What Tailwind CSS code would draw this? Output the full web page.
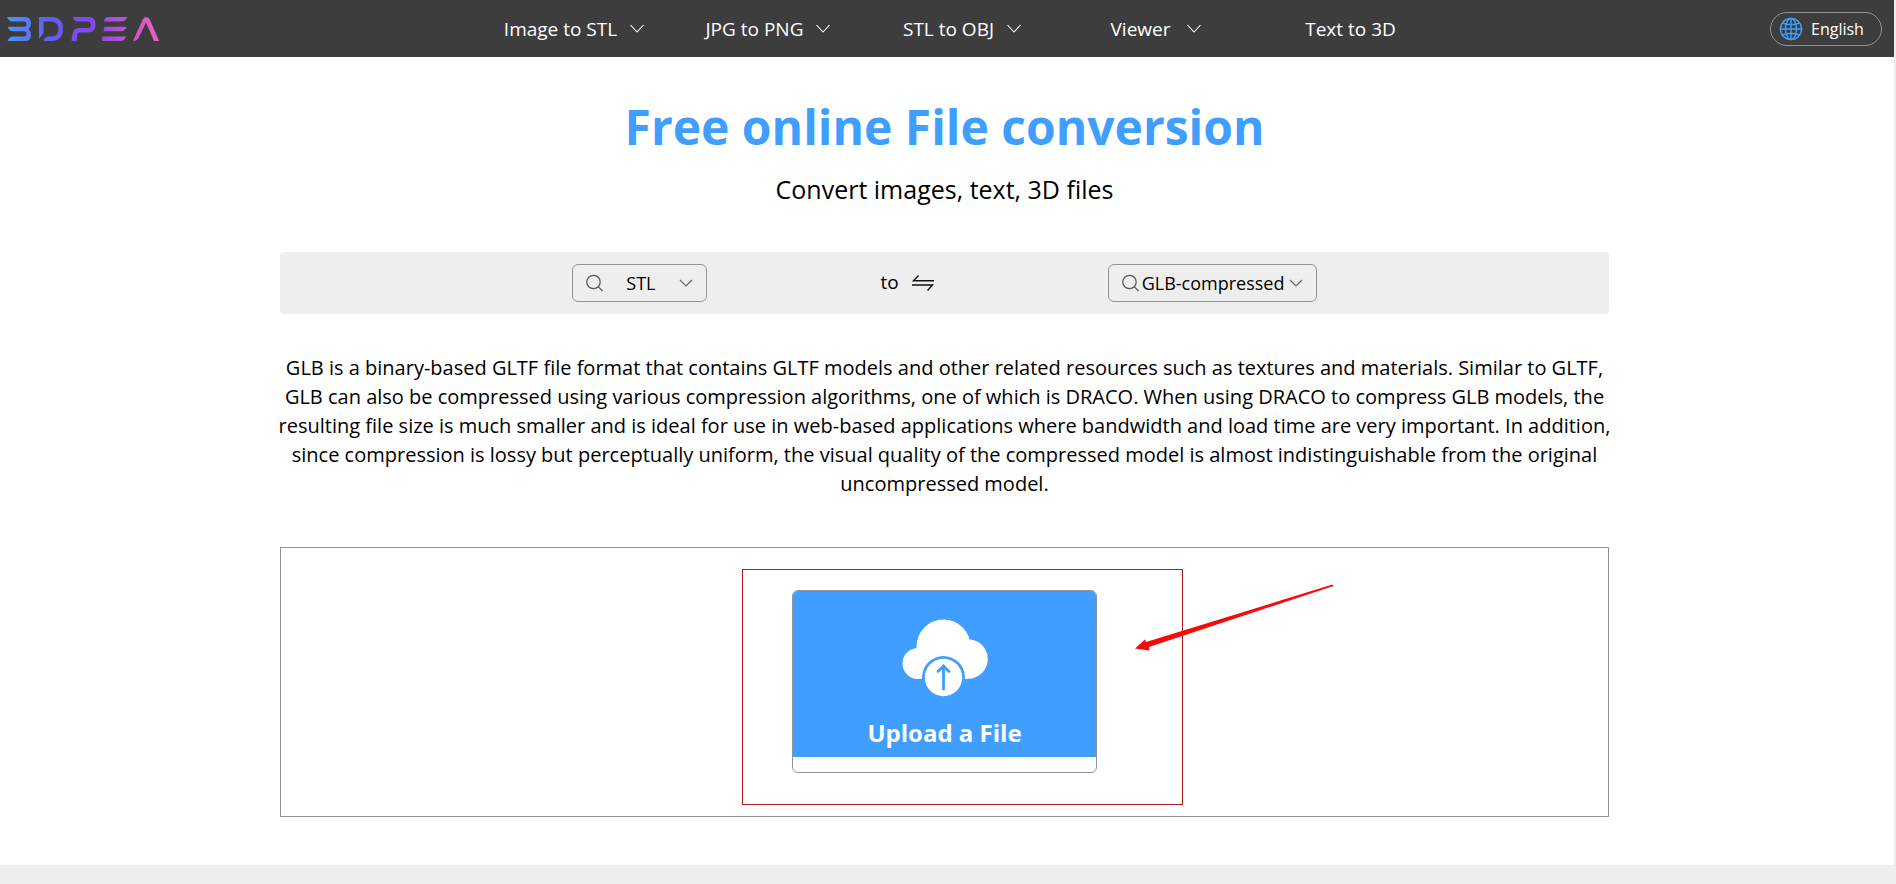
<!DOCTYPE html>
<html lang="en">

<head>
    <meta charset="UTF-8">
    <meta name="viewport" content="width=device-width, initial-scale=1.0">
    <script src="https://cdn.jsdelivr.net/npm/@tailwindcss/browser@4"></script>
    <title>3DPEA - Free online File conversion</title>
</head>

<body class="flex flex-col min-h-screen border-r-2 border-[#eeeeee] bg-white text-black font-['Open_Sans','Noto_Sans',sans-serif]">

    <!-- Header -->
    <header class="flex items-center justify-between h-[57px] pl-[7px] pr-3 bg-[#3d3d3d] text-white">
        <a href="#" aria-label="3DPEA" class="w-[228px]">
            <svg class="w-[153px] h-6" viewBox="0 0 153 24" fill="none">
                <defs>
                    <linearGradient id="logo" gradientUnits="userSpaceOnUse" x1="0" y1="0" x2="153" y2="0">
                        <stop offset="0" stop-color="#4a96f5" />
                        <stop offset="0.3" stop-color="#6659f5" />
                        <stop offset="0.55" stop-color="#8348ee" />
                        <stop offset="0.75" stop-color="#b750d8" />
                        <stop offset="1" stop-color="#f062bc" />
                    </linearGradient>
                </defs>
                <g fill="url(#logo)">
                    <path d="M0 0H18Q24 0 24 6Q24 10 21.500 12Q24 14 24 18Q24 24 18 24H0.500Q2 20 5.500 19.500H17Q19.500 19.500 19.500 17Q19.500 14.300 17 14.300H6Q2.500 14.300 0.500 9.800H17Q19.500 9.800 19.500 7.200Q19.500 4.500 17 4.500H5.500Q2 4.500 0 0Z" />
                    <path d="M32 0H44Q56 0 56 12Q56 24 44 24H36.500Q37.500 19.500 42 19.500H44Q51.500 19.500 51.500 12Q51.500 4.500 44 4.500H36.500V16L32 22Z" />
                    <path d="M66 0H82Q88.500 0 88.500 7.500Q88.500 15.500 81 15.500H72.500Q70.500 15.500 70.300 18L69.500 24H64.500L65.500 17Q66.500 11 72 11H80.500Q84 11 84 7.700Q84 4.500 80.500 4.500H70.500Q67 4.500 66 0Z" />
                    <path d="M101 0H120Q118.500 4.500 114.500 4.500H97Q98 0 101 0Z" />
                    <path d="M97.500 9.700H119.500Q118 14.300 114 14.300H96.500Z" />
                    <path d="M95.500 19.500H119Q117.500 24 113.500 24H95Z" />
                    <path d="M126 24L135.500 3Q137 0 139 0Q141.500 0 143 3L152 24H147L139 5.500L131.500 21Q130 24 126 24Z" />
                </g>
            </svg>
        </a>

        <nav class="grid grid-cols-5 w-[970px] text-[19px] leading-7">
            <a href="#" class="flex items-center justify-center gap-3 whitespace-nowrap">Image to STL
                <svg class="w-4 h-4" viewBox="0 0 16 16" fill="none" stroke="currentColor" stroke-width="1.1"><path d="M1.500 4L8 11L14.500 4" /></svg>
            </a>
            <a href="#" class="flex items-center justify-center gap-3 whitespace-nowrap">JPG to PNG
                <svg class="w-4 h-4" viewBox="0 0 16 16" fill="none" stroke="currentColor" stroke-width="1.1"><path d="M1.500 4L8 11L14.500 4" /></svg>
            </a>
            <a href="#" class="flex items-center justify-center gap-3 whitespace-nowrap">STL to OBJ
                <svg class="w-4 h-4" viewBox="0 0 16 16" fill="none" stroke="currentColor" stroke-width="1.1"><path d="M1.500 4L8 11L14.500 4" /></svg>
            </a>
            <a href="#" class="flex items-center justify-center gap-4 whitespace-nowrap">Viewer
                <svg class="w-4 h-4" viewBox="0 0 16 16" fill="none" stroke="currentColor" stroke-width="1.1"><path d="M1.500 4L8 11L14.500 4" /></svg>
            </a>
            <a href="#" class="flex items-center justify-center whitespace-nowrap">Text to 3D</a>
        </nav>

        <div class="flex justify-end w-48">
            <button class="flex items-center gap-2 h-[34px] px-2 w-28 border border-[#909399] rounded-full text-base">
                <svg class="w-6 h-6 shrink-0" viewBox="0 0 24 24" fill="none" stroke="#409eff" stroke-width="1.4">
                    <circle cx="12" cy="12" r="10.600" />
                    <ellipse cx="12" cy="12" rx="5.500" ry="10.600" />
                    <path d="M12 1.400V22.600M1.400 12H22.600M3.500 6Q12 9.500 20.500 6M3.500 18Q12 14.500 20.500 18" />
                </svg>
                English
            </button>
        </div>
    </header>

    <main class="grow w-full pr-[5px] pb-12">
        <div class="w-full max-w-[1329px] mx-auto text-center">
            <h1 class="pt-9 text-5xl leading-[68px] font-bold text-[#409eff]">Free online File conversion</h1>
            <p class="mt-3 text-[25px] leading-8">Convert images, text, 3D files</p>

            <!-- Format picker -->
            <div class="flex items-center justify-center mt-[47px] h-[62px] rounded bg-[#eeeeee] text-lg">
                <div class="flex items-center w-[135px] h-[38px] px-3 border border-[#909399] rounded-md">
                    <svg class="w-[18px] h-[18px] shrink-0" viewBox="0 0 18 18" fill="none" stroke="#555" stroke-width="1.2"><circle cx="8.500" cy="8" r="6.700" /><path d="M13.200 12.700L17.500 17" /></svg>
                    <select aria-label="From format" class="grow min-w-0 appearance-none bg-transparent text-center outline-none">
                        <option>STL</option>
                    </select>
                    <svg class="w-4 h-4 shrink-0" viewBox="0 0 16 16" fill="none" stroke="#666" stroke-width="1.2"><path d="M2 5L8 11L14 5" /></svg>
                </div>
                <div class="flex items-center gap-3 mx-[173px]">
                    <span class="text-[19px]">to</span>
                    <button aria-label="Swap formats">
                        <svg class="w-6 h-4" viewBox="0 0 24 16" fill="none" stroke="#111" stroke-width="1.400"><path d="M7.500 0.500L2.500 5.800H23M1 10H21.500L16.500 15.500" /></svg>
                    </button>
                </div>
                <div class="flex items-center w-[209px] h-[38px] px-3 border border-[#909399] rounded-md">
                    <svg class="w-[18px] h-[18px] shrink-0" viewBox="0 0 18 18" fill="none" stroke="#555" stroke-width="1.2"><circle cx="8.500" cy="8" r="6.700" /><path d="M13.200 12.700L17.500 17" /></svg>
                    <select aria-label="To format" class="grow min-w-0 appearance-none bg-transparent text-center outline-none">
                        <option>GLB-compressed</option>
                    </select>
                    <svg class="w-4 h-4 shrink-0" viewBox="0 0 16 16" fill="none" stroke="#666" stroke-width="1.2"><path d="M2 5L8 11L14 5" /></svg>
                </div>
            </div>

            <p class="mt-[39px] -mx-1 text-xl leading-[29px]">
                GLB is a binary-based GLTF file format that contains GLTF models and other related resources such as textures and materials. Similar to GLTF, GLB can also be compressed using various compression algorithms, one of which is DRACO. When using DRACO to compress GLB models, the resulting file size is much smaller and is ideal for use in web-based applications where bandwidth and load time are very important. In addition, since compression is lossy but perceptually uniform, the visual quality of the compressed model is almost indistinguishable from the original uncompressed model.
            </p>

            <!-- Upload area -->
            <div class="relative flex justify-center mt-[49px] pt-[42px] pb-[43px] border border-[#909399]">
                <button class="flex flex-col w-[305px] h-[183px] overflow-hidden border border-[#909399] rounded-md bg-white">
                    <span class="flex flex-col items-center w-full h-[166px] pt-7 bg-[#409eff] text-white">
                        <svg class="w-[86px] h-[78px]" viewBox="0 0 86 78">
                            <g fill="#fff">
                                <circle cx="41.500" cy="27.500" r="27" />
                                <circle cx="66" cy="40" r="19.800" />
                                <circle cx="16" cy="44.500" r="15.500" />
                                <path d="M16 30H66V59.800H16Z" />
                            </g>
                            <circle cx="41.500" cy="58.500" r="21.500" fill="#409eff" />
                            <circle cx="41.500" cy="58.500" r="18.700" fill="#fff" />
                            <path d="M41.500 70V48M36 52.500L41.500 47L47 52.500" fill="none" stroke="#409eff" stroke-width="2.800" stroke-linecap="round" />
                        </svg>
                        <span class="mt-5 text-2xl font-bold">Upload a File</span>
                    </span>
                </button>

                <!-- Callout frame and arrow -->
                <div class="absolute left-[461px] top-[21px] w-[441px] h-[236px] border border-[#b01c1c] pointer-events-none"></div>
                <svg class="absolute left-[854px] top-9 w-[200px] h-[68px] pointer-events-none" viewBox="0 0 200 68" fill="#f60a0a">
                    <path d="M197.500 0.500L198.500 2L14 63L14.500 66.500L0 64.500L10 55.500L11 58Z" />
                </svg>
            </div>
        </div>
    </main>

    <footer class="h-[19px] bg-[#eeeeee]"></footer>

</body>

</html>
